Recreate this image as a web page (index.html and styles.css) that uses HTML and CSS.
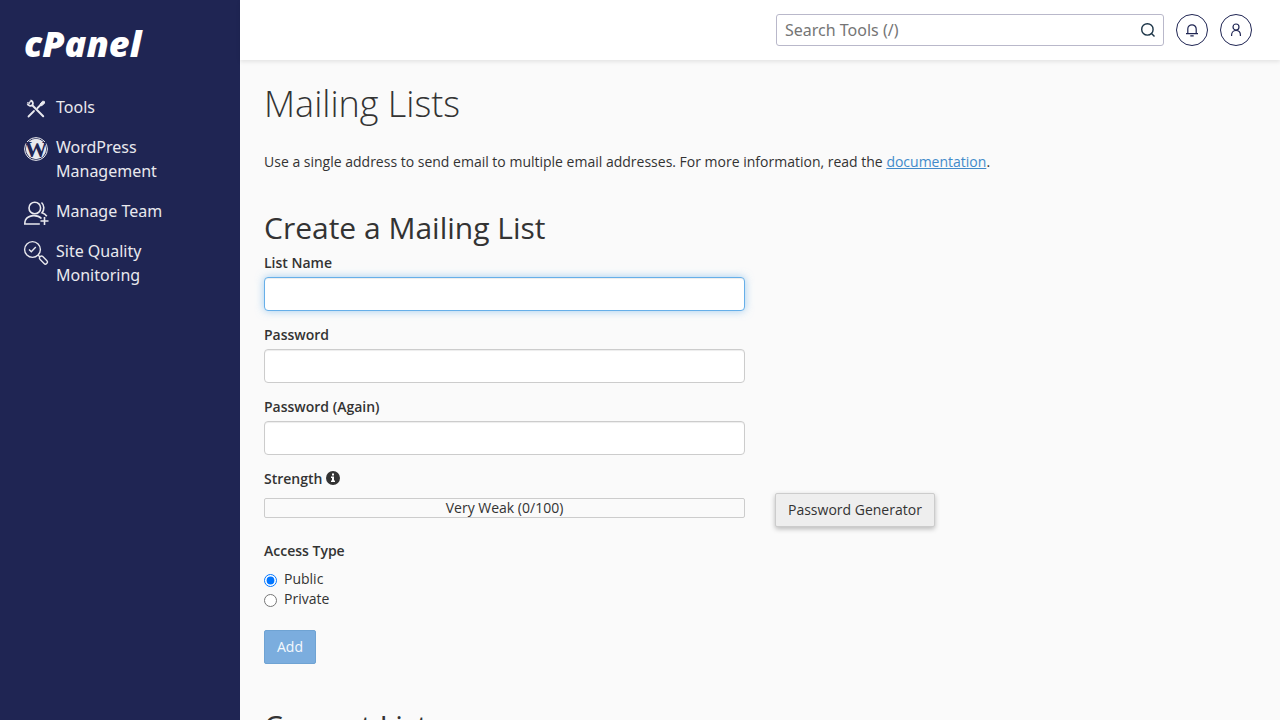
FILE: index.html
```html
<!DOCTYPE html>
<html lang="en">
<head>
<meta charset="utf-8">
<title>Mailing Lists</title>
<meta name="viewport" content="width=device-width, initial-scale=1">
<link rel="stylesheet" href="styles.css">
</head>
<body>
<div class="app">
  <aside class="sidebar">
    <a class="brand" href="#">cPanel</a>
    <nav class="nav">
      <a class="nav-item" href="#">
        <svg class="nav-icon" viewBox="0 0 24 24" fill="none" stroke="currentColor" aria-hidden="true">
          <path d="M8.5 8.5 19.200 19.200" stroke-width="2" stroke-linecap="round"/>
          <path d="M3.500 6.500a3 3 0 0 0 5 1.500 3 3 0 0 0-2-4.500" stroke-width="1.800"/>
          <path d="M3.300 5.500 5.500 6.300 6.500 3.800" stroke-width="1.200"/>
          <path d="M4.500 19.500 10 14M13.500 11 17 7.500" stroke-width="1.800" stroke-linecap="round"/>
          <path d="m16 7.200 2.600-3 1.800.200.200 1.800-3 2.600z" fill="currentColor" stroke-width="1"/>
        </svg>
        <span>Tools</span>
      </a>
      <a class="nav-item" href="#">
        <svg class="nav-icon" viewBox="0 0 24 24" aria-hidden="true">
          <circle cx="12" cy="12" r="11.400" fill="none" stroke="currentColor" stroke-width="1"/>
          <circle cx="12" cy="12" r="10.200" fill="currentColor"/>
          <text class="mark" x="12" y="20" text-anchor="middle">W</text>
        </svg>
        <span>WordPress Management</span>
      </a>
      <a class="nav-item" href="#">
        <svg class="nav-icon" viewBox="0 0 24 24" fill="none" stroke="currentColor" stroke-width="1.600" aria-hidden="true">
          <circle cx="10.800" cy="7" r="5.800"/>
          <path d="M17.500 1.500c3 2.500 3 7.500.500 10.300 2 .600 3.500 1.500 4.800 3.400"/>
          <path d="M17.500 17.500c-4-4.200-13-4-16 1.500-.500 1-.700 2.500-.700 4h15"/>
          <path d="M20.500 16v8M16.500 20h8"/>
        </svg>
        <span>Manage Team</span>
      </a>
      <a class="nav-item" href="#">
        <svg class="nav-icon" viewBox="0 0 24 24" fill="none" stroke="currentColor" stroke-width="1.400" aria-hidden="true">
          <circle cx="8.500" cy="8.500" r="7.900"/>
          <path d="m5 8.500 2.300 2.300 4.500-4.800"/>
          <path d="m14 14 2 2"/>
          <rect x="14.700" y="17" width="9.500" height="4" rx="1.800" transform="rotate(45 19.400 19)"/>
        </svg>
        <span>Site Quality Monitoring</span>
      </a>
    </nav>
  </aside>
  <div class="page">
    <header class="topbar">
      <form class="search" role="search">
        <input class="search-input" type="text" placeholder="Search Tools (/)" aria-label="Search Tools">
        <button class="search-button" type="button" aria-label="Search">
          <svg width="16" height="16" viewBox="0 0 16 16" fill="none" stroke="currentColor" stroke-width="1.400" aria-hidden="true"><circle cx="7.400" cy="7.400" r="5.700"/><path d="m11.500 11.500 3 3"/></svg>
        </button>
      </form>
      <button class="round-button" type="button" aria-label="Notifications">
        <svg width="16" height="16" viewBox="0 0 16 16" fill="none" stroke="currentColor" stroke-width="1.200" aria-hidden="true"><path d="M3.800 11.500V7a4.200 4.200 0 0 1 8.400 0v4.500M2 11.600h12M6.300 13.800h3.400"/></svg>
      </button>
      <button class="round-button" type="button" aria-label="Account">
        <svg width="16" height="16" viewBox="0 0 16 16" fill="none" stroke="currentColor" stroke-width="1.200" aria-hidden="true"><circle cx="8" cy="5" r="3"/><path d="M3.600 14v-1c0-6 8.800-6 8.800 0v1"/></svg>
      </button>
    </header>
    <main class="content">
      <h1 class="title">Mailing Lists</h1>
      <p class="intro">Use a single address to send email to multiple email addresses. For more information, read the <a class="link" href="#">documentation</a>.</p>
      <h2 class="heading">Create a Mailing List</h2>
      <form class="form">
        <div class="field">
          <label class="label" for="list-name">List Name</label>
          <input class="input" id="list-name" type="text" autofocus>
        </div>
        <div class="field">
          <label class="label" for="password">Password</label>
          <input class="input" id="password" type="password">
        </div>
        <div class="field">
          <label class="label" for="password-again">Password (Again)</label>
          <input class="input" id="password-again" type="password">
        </div>
        <div class="strength">
          <div class="label" id="strength-label">Strength
            <svg class="info" width="14" height="14" viewBox="0 0 14 14" aria-hidden="true"><circle cx="7" cy="7" r="7" fill="#333"/><path d="M6 2.500h2v2H6zM5 5.600h3v4h1v1.400H5V9.600h1V7H5z" fill="#fff"/></svg>
          </div>
          <div class="strength-row">
            <div class="meter" role="status" aria-labelledby="strength-label">Very Weak (0/100)</div>
            <button class="button generator" type="button">Password Generator</button>
          </div>
        </div>
        <fieldset class="access">
          <legend class="label">Access Type</legend>
          <label class="option"><input class="radio" type="radio" name="access" checked>Public</label>
          <label class="option"><input class="radio" type="radio" name="access">Private</label>
        </fieldset>
        <button class="button primary" type="button">Add</button>
      </form>
      <h2 class="heading current">Current Lists</h2>
    </main>
  </div>
</div>
</body>
</html>
```
FILE: styles.css
```css
* {
  box-sizing: border-box;
}

body {
  margin: 0;
  background: #fafafa;
  color: #333;
  font: 14px/20px "Open Sans", sans-serif;
}

button,
input {
  font: inherit;
}

.app {
  display: flex;
  height: 100vh;
}

.sidebar {
  flex: 0 0 240px;
  padding: 24px;
  background: #1f2553;
}

.brand {
  display: block;
  color: #fff;
  font-size: 36px;
  font-weight: 800;
  font-style: italic;
  line-height: 40px;
  text-decoration: none;
}

.nav {
  display: flex;
  flex-direction: column;
  gap: 16px;
  margin-top: 31px;
}

.nav-item {
  display: flex;
  gap: 8px;
  padding-right: 32px;
  color: #e9e9ee;
  font: 16px/24px "Noto Sans", sans-serif;
  text-decoration: none;
}

.nav-icon {
  flex: none;
  width: 24px;
  height: 24px;
  margin: 2px 0 -2px;
  overflow: visible;
}

.mark {
  fill: #1f2553;
  font: bold 23px "Liberation Serif", serif;
}

.page {
  flex: 1;
  display: flex;
  flex-direction: column;
  min-width: 0;
}

.topbar {
  flex: none;
  display: flex;
  justify-content: flex-end;
  align-items: center;
  gap: 12px;
  padding: 14px 28px;
  background: #fff;
  box-shadow: 0 2px 4px rgba(0, 0, 0, 0.09);
}

.search {
  display: flex;
  flex: 0 1 388px;
  height: 32px;
  border: 1px solid #b9b8ca;
  border-radius: 3px;
}

.search-input {
  flex: 1;
  min-width: 0;
  padding: 0 8px;
  border: 0;
  background: none;
  font: 16px/24px "Noto Sans", sans-serif;
}

.search-input::placeholder {
  color: #757575;
}

.search-button {
  display: flex;
  align-items: center;
  padding: 0 7px;
  border: 0;
  background: none;
  color: #1b3447;
}

.round-button {
  display: flex;
  align-items: center;
  justify-content: center;
  width: 32px;
  height: 32px;
  padding: 0;
  border: 1px solid #1f2553;
  border-radius: 50%;
  background: #fff;
  color: #1f2553;
}

.content {
  flex: 1;
  padding: 20px 24px;
  overflow: hidden;
}

.title {
  margin: 0;
  font-size: 36px;
  font-weight: 300;
  line-height: 48px;
}

.intro {
  margin: 24px 0 0;
}

.link {
  color: #428bca;
}

.heading {
  margin: 40px 0 0;
  font-family: "Open Sans Medium", "Open Sans", sans-serif;
  font-size: 30px;
  font-weight: 500;
  line-height: 32px;
}

.heading.current {
  margin-top: 46px;
}

.form {
  margin-top: 9px;
}

.field {
  width: 49%;
  max-width: 481px;
  margin-bottom: 14px;
}

.label {
  display: block;
  margin-bottom: 4px;
  padding: 0;
  font-weight: 600;
}

.input {
  display: block;
  width: 100%;
  height: 34px;
  padding: 6px 12px;
  border: 1px solid #ccc;
  border-radius: 4px;
  background: #fff;
  box-shadow: inset 0 1px 1px rgba(0, 0, 0, 0.075);
}

.input:focus {
  border-color: #66afe9;
  outline: 0;
  box-shadow: inset 0 1px 1px rgba(0, 0, 0, 0.075), 0 0 8px rgba(102, 175, 233, 0.6);
}

.info {
  vertical-align: -1px;
}

.strength-row {
  display: flex;
  align-items: flex-start;
  gap: 30px;
}

.meter {
  flex: 0 1 481px;
  height: 20px;
  margin-top: 5px;
  border: 1px solid #ccc;
  border-radius: 2px;
  line-height: 18px;
  text-align: center;
}

.button {
  height: 34px;
  padding: 6px 12px;
  border: 1px solid #ccc;
  border-radius: 2px;
}

.generator {
  background: #eee;
  color: #333;
  box-shadow: 0 2px 5px rgba(0, 0, 0, 0.26);
}

.access {
  margin: 14px 0 21px;
  padding: 0;
  border: 0;
}

.access .label {
  margin-bottom: 8px;
}

.option {
  display: flex;
  align-items: center;
  gap: 7px;
}

.radio {
  width: 13px;
  height: 13px;
  margin: 3px 0 0;
}

.primary {
  border-color: #6fa3d3;
  background: #7badde;
  color: #f5f9fd;
}
```
